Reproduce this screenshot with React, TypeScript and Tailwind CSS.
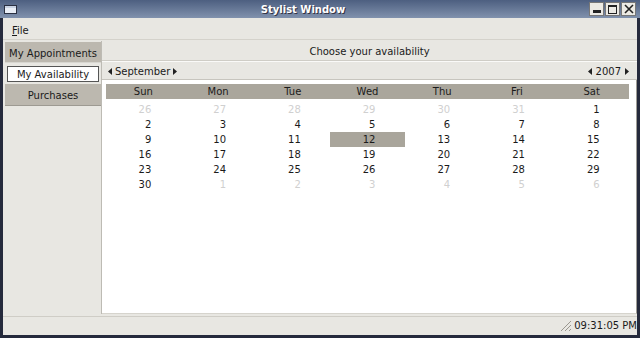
import React from 'react';

const days: { d: number; muted?: boolean; sel?: boolean }[][] = [
  [{ d: 26, muted: true }, { d: 27, muted: true }, { d: 28, muted: true }, { d: 29, muted: true }, { d: 30, muted: true }, { d: 31, muted: true }, { d: 1 }],
  [{ d: 2 }, { d: 3 }, { d: 4 }, { d: 5 }, { d: 6 }, { d: 7 }, { d: 8 }],
  [{ d: 9 }, { d: 10 }, { d: 11 }, { d: 12, sel: true }, { d: 13 }, { d: 14 }, { d: 15 }],
  [{ d: 16 }, { d: 17 }, { d: 18 }, { d: 19 }, { d: 20 }, { d: 21 }, { d: 22 }],
  [{ d: 23 }, { d: 24 }, { d: 25 }, { d: 26 }, { d: 27 }, { d: 28 }, { d: 29 }],
  [{ d: 30 }, { d: 1, muted: true }, { d: 2, muted: true }, { d: 3, muted: true }, { d: 4, muted: true }, { d: 5, muted: true }, { d: 6, muted: true }],
];

const weekdays = ['Sun', 'Mon', 'Tue', 'Wed', 'Thu', 'Fri', 'Sat'];

const Arrow = ({ dir }: { dir: 'l' | 'r' }) => (
  <svg width="4" height="7" viewBox="0 0 4 7" className="shrink-0">
    {dir === 'l' ? <polygon points="4,0 4,7 0,3.5" fill="#222" /> : <polygon points="0,0 0,7 4,3.5" fill="#222" />}
  </svg>
);

const App: React.FC = () => {
  return (
    <div
      className="w-[640px] h-[338px] bg-[#252a3c] flex flex-col text-[10px] leading-[12px] text-[#1a1a1a] overflow-hidden"
      style={{ fontFamily: '"DejaVu Sans", sans-serif' }}
    >
      {/* title bar */}
      <div className="h-[18px] flex items-center px-[4px] bg-gradient-to-b from-[#4d5f80] to-[#8192ad]">
        <div className="w-[13px] h-[9px] border border-[#2a3042] bg-[#e9eef6] shadow-[inset_0_2px_0_#c9d3e3]" />
        <div className="flex-1 text-center text-white font-bold text-[10px] pt-[1px] [text-shadow:1px_1px_0_#334]">Stylist Window</div>
        <div className="flex gap-[1px]">
          <div className="w-[15px] h-[14px] bg-[#eceae4] border border-[#777] flex items-end justify-center pb-[2px]">
            <div className="w-[8px] h-[3px] bg-[#222]" />
          </div>
          <div className="w-[15px] h-[14px] bg-[#eceae4] border border-[#777] flex items-center justify-center">
            <div className="w-[9px] h-[9px] border border-[#222] border-t-2" />
          </div>
          <div className="w-[15px] h-[14px] bg-[#eceae4] border border-[#777] flex items-center justify-center">
            <svg width="10" height="10" viewBox="0 0 10 10">
              <path d="M1 1L9 9M9 1L1 9" stroke="#222" strokeWidth="1.6" />
            </svg>
          </div>
        </div>
      </div>

      {/* body */}
      <div className="flex-1 mx-[3px] mb-[3px] bg-[#e8e7e2] flex flex-col">
        {/* menu */}
        <div className="h-[22px] flex items-center px-[9px] pt-[4px] border-b border-[#d4d2cb]">
          <span>
            <span className="underline">F</span>ile
          </span>
        </div>

        <div className="flex flex-1 min-h-0 pt-[1px]">
          {/* sidebar */}
          <div className="w-[98px] flex flex-col pl-[2px] pt-[1px]">
            <div className="h-[21px] bg-[#bcb8af] flex items-center justify-center pt-[3px] border-b border-[#d8d6d0]">My Appointments</div>
            <div className="mx-[2px] mt-[3px] h-[16px] bg-white border border-[#555] flex items-center justify-center pt-[2px]">My Availability</div>
            <div className="mt-[2px] h-[22px] bg-[#bcb8af] flex items-center justify-center pt-[3px] border-b border-[#9d9a92]">Purchases</div>
          </div>

          {/* main */}
          <div className="flex-1 flex flex-col border-l border-[#bdbbb4]">
            <div className="h-[20px] flex items-center justify-center pt-[3px] border-b border-[#cfcdc6]">Choose your availability</div>
            <div className="h-[19px] flex items-center justify-between px-[5px] pt-[2px] border-b border-[#c7c5be] border-t border-t-[#fafaf8]">
              <div className="flex items-center gap-[3px] pl-[1px]">
                <Arrow dir="l" />
                <span>September</span>
                <Arrow dir="r" />
              </div>
              <div className="flex items-center gap-[4px] pr-[3px]">
                <Arrow dir="l" />
                <span>2007</span>
                <Arrow dir="r" />
              </div>
            </div>
            <div className="flex-1 bg-white border-r border-[#9f9d96] border-b border-b-[#d6d4cd] pt-[4px] px-[4px]">
              <div className="w-[523px]">
                <div className="grid grid-cols-7 h-[15px] bg-[#aaa69c] items-center pt-[1px]">
                  {weekdays.map((w) => (
                    <div key={w} className="text-center">{w}</div>
                  ))}
                </div>
                <div className="mt-[3px]">
                  {days.map((row, i) => (
                    <div key={i} className="grid grid-cols-7 h-[15px]">
                      {row.map((c, j) => (
                        <div key={j} className={`flex items-center justify-center pt-[1px] ${c.sel ? 'bg-[#a9a59b]' : ''}`}>
                          <span className={`w-[16px] text-right ${c.muted ? 'text-[#d0d0d0]' : ''}`}>{c.d}</span>
                        </div>
                      ))}
                    </div>
                  ))}
                </div>
              </div>
            </div>
          </div>
        </div>

        {/* status bar */}
        <div className="h-[19px] mt-[2px] border-t border-[#cfcdc6] flex items-center justify-end gap-[2px]">
          <svg width="12" height="12" viewBox="0 0 12 12">
            <path d="M11 1L1 11M11 5L5 11M11 9L9 11" stroke="#9a978f" strokeWidth="1" />
          </svg>
          <span>09:31:05 PM</span>
        </div>
      </div>
    </div>
  );
};

export default App;
